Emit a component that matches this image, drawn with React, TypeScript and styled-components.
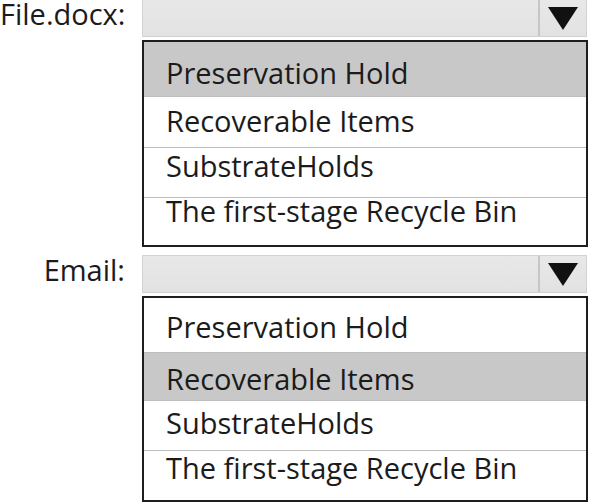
import React from 'react';
import styled, { createGlobalStyle } from 'styled-components';

const Global = createGlobalStyle`
  body {
    margin: 0;
    background: #ffffff;
    font-family: 'Open Sans', 'Noto Sans', sans-serif;
    color: #1b1b1b;
  }
`;

const Page = styled.div`
  width: 590px;
  height: 503px;
  overflow: hidden;
  display: flex;
  flex-direction: column;
  gap: 8px;
`;

const Group = styled.div`
  display: grid;
  grid-template-columns: 142px 446px;
  align-items: start;
`;

const Label = styled.div<{ $top: number }>`
  font-size: 29px;
  line-height: 24px;
  text-align: right;
  padding-right: 17px;
  margin-top: ${(p) => p.$top + 3}px;
`;

const Column = styled.div`
  display: flex;
  flex-direction: column;
`;

const Combo = styled.div<{ $top: number }>`
  height: 38px;
  margin-top: ${(p) => p.$top}px;
  margin-right: 1px;
  display: flex;
  border: 1px solid #d2d2d2;
  background: linear-gradient(#e8e8e8, #e2e2e2);
  box-sizing: border-box;
`;

const ComboField = styled.div`
  flex: 1;
`;

const ArrowButton = styled.div`
  width: 46px;
  border-left: 2px solid #c6c6c6;
  display: flex;
  align-items: center;
  justify-content: center;
`;

const List = styled.div`
  margin-top: 3px;
  border: 2px solid #1e1e1e;
  display: flex;
  flex-direction: column;
`;

const Item = styled.div<{ $selected?: boolean; $h: number; $pad: number }>`
  height: ${(p) => p.$h}px;
  box-sizing: border-box;
  padding-left: 22px;
  padding-top: ${(p) => p.$pad}px;
  font-size: 29px;
  line-height: 24px;
  white-space: nowrap;
  background: ${(p) => (p.$selected ? '#c8c8c8' : '#ffffff')};
  & + & {
    border-top: 1px solid #bdbdbd;
  }
`;

const options = [
  'Preservation Hold',
  'Recoverable Items',
  'SubstrateHolds',
  'The first-stage Recycle Bin',
];

type Row = { h: number; pad: number };

const fileRows: Row[] = [
  { h: 54, pad: 18.5 },
  { h: 51, pad: 11.5 },
  { h: 50, pad: 5.5 },
  { h: 48, pad: 0.5 },
];

const emailRows: Row[] = [
  { h: 54, pad: 16.5 },
  { h: 48, pad: 13.5 },
  { h: 50, pad: 9.5 },
  { h: 50, pad: 4.5 },
];

function Arrow() {
  return (
    <svg width="30" height="23" viewBox="0 0 30 23">
      <polygon points="0,0 30,0 15,23" fill="#111" />
    </svg>
  );
}

function Dropdown({
  label,
  selected,
  top,
  rows,
}: {
  label: string;
  selected: number;
  top: number;
  rows: Row[];
}) {
  return (
    <Group>
      <Label $top={top}>{label}</Label>
      <Column>
        <Combo $top={top}>
          <ComboField />
          <ArrowButton>
            <Arrow />
          </ArrowButton>
        </Combo>
        <List>
          {options.map((o, i) => (
            <Item key={o} $selected={i === selected} $h={rows[i].h} $pad={rows[i].pad}>
              {o}
            </Item>
          ))}
        </List>
      </Column>
    </Group>
  );
}

export default function App() {
  return (
    <>
      <Global />
      <Page>
        <Dropdown label="File.docx:" selected={0} top={-1} rows={fileRows} />
        <Dropdown label="Email:" selected={1} top={0} rows={emailRows} />
      </Page>
    </>
  );
}
